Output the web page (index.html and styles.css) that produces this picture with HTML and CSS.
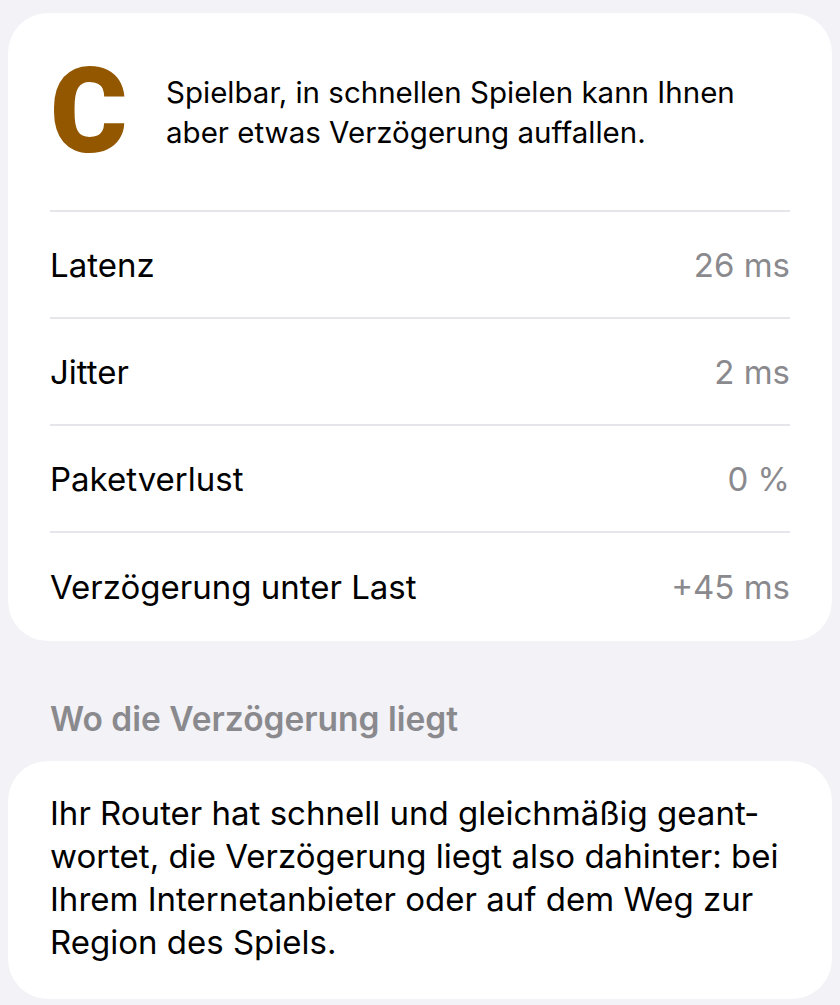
FILE: index.html
```html
<!DOCTYPE html>
<html lang="de">
<head>
    <meta charset="UTF-8">
    <meta name="viewport" content="width=device-width, initial-scale=1.0">
    <title>Spielqualität</title>
    <link rel="stylesheet" href="styles.css">
</head>
<body>

    <!-- Rating card -->
    <div class="card">
        <div class="summary">
            <div class="grade">C</div>
            <p class="summary-text">Spielbar, in schnellen Spielen kann Ihnen aber etwas Verzögerung auffallen.</p>
        </div>

        <div class="row">
            <span class="label">Latenz</span>
            <span class="value">26 ms</span>
        </div>
        <div class="row">
            <span class="label">Jitter</span>
            <span class="value">2 ms</span>
        </div>
        <div class="row">
            <span class="label">Paketverlust</span>
            <span class="value">0 %</span>
        </div>
        <div class="row">
            <span class="label">Verzögerung unter Last</span>
            <span class="value">+45 ms</span>
        </div>
    </div>

    <!-- Where the delay is -->
    <h2 class="section-title">Wo die Verzögerung liegt</h2>
    <div class="card note">
        <p>Ihr Router hat schnell und gleichmäßig geant&shy;wortet, die Verzögerung liegt also dahinter: bei Ihrem Internetanbieter oder auf dem Weg zur Region des Spiels.</p>
    </div>

</body>
</html>
```

FILE: styles.css
```css
body {
    font-family: Inter, "Noto Sans", sans-serif;
    margin: 0;
    padding: 13px 8px;
    background-color: #f2f2f7;
    color: #000;
}
.card {
    background-color: white;
    border-radius: 40px;
    padding: 0 42px;
}
.summary {
    display: flex;
    align-items: center;
    gap: 36px;
    height: 199px;
    border-bottom: 2px solid #e5e5ea;
    box-sizing: border-box;
}
.grade {
    font-family: Roboto, sans-serif;
    font-size: 118px;
    font-weight: 900;
    color: #935700;
    line-height: 1;
    width: 80px;
    flex-shrink: 0;
}
.summary-text {
    margin: 0;
    font-size: 29.5px;
    line-height: 40px;
}
.row {
    display: flex;
    justify-content: space-between;
    align-items: center;
    height: 107px;
    border-bottom: 2px solid #e5e5ea;
    box-sizing: border-box;
    font-size: 33px;
}
.row:last-child {
    border-bottom: none;
    height: 108px;
}
.value {
    color: #8a8a8e;
}
.section-title {
    margin: 0;
    padding: 58px 42px 22px;
    font-size: 33.5px;
    line-height: 40px;
    font-weight: 600;
    color: #8a8a8e;
}
.note {
    padding: 31px 42px 35px;
}
.note p {
    margin: 0;
    font-size: 33px;
    line-height: 43px;
    hyphens: manual;
}
```
